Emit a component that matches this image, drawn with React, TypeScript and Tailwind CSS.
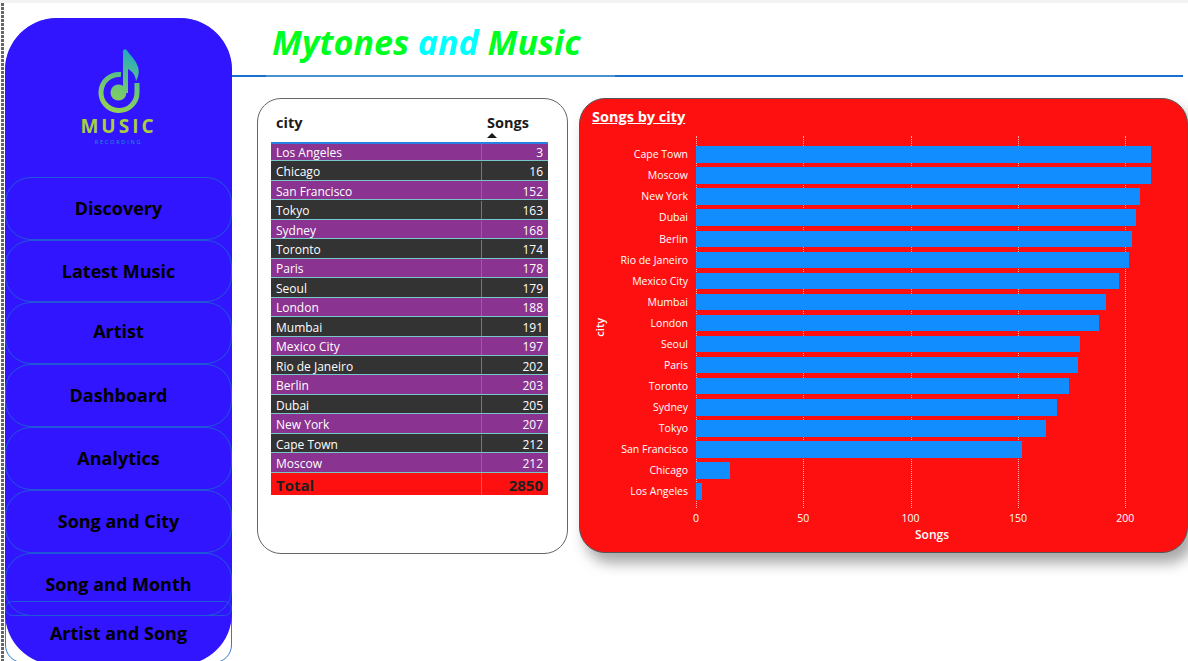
const cities: [string, number][] = [
  ['Los Angeles', 3],
  ['Chicago', 16],
  ['San Francisco', 152],
  ['Tokyo', 163],
  ['Sydney', 168],
  ['Toronto', 174],
  ['Paris', 178],
  ['Seoul', 179],
  ['London', 188],
  ['Mumbai', 191],
  ['Mexico City', 197],
  ['Rio de Janeiro', 202],
  ['Berlin', 203],
  ['Dubai', 205],
  ['New York', 207],
  ['Cape Town', 212],
  ['Moscow', 212],
];

const chartRows: [string, number][] = [
  ['Cape Town', 212],
  ['Moscow', 212],
  ...cities.slice(0, 15).reverse(),
];

const navItems = [
  { label: 'Discovery', className: 'h-[63px]' },
  { label: 'Latest Music', className: 'h-[62px]' },
  { label: 'Artist', className: 'h-[62px] pb-[3px]' },
  { label: 'Dashboard', className: 'h-[63px]' },
  { label: 'Analytics', className: 'h-[63px]' },
  { label: 'Song and City', className: 'h-[63px]' },
  { label: 'Song and Month', className: 'h-[63px]' },
];

function Logo() {
  return (
    <svg width="44" height="64" viewBox="0 0 44 64" fill="none">
      <defs>
        <linearGradient id="note" gradientUnits="userSpaceOnUse" x1="10" y1="60" x2="32" y2="0">
          <stop offset="0" stopColor="#93d255" />
          <stop offset="0.5" stopColor="#62c47c" />
          <stop offset="1" stopColor="#1fa8c8" />
        </linearGradient>
      </defs>
      <path d="M24 25.6A18 18 0 1 0 40 43.5V34" stroke="url(#note)" strokeWidth="5" />
      <circle cx="21.5" cy="43.5" r="8" fill="url(#note)" />
      <path
        d="M26 3C26 0 28.5 -0.5 30 1.5C33 6 39 11 41 18C42.5 23 41.5 28 39 32C38.5 26 35 22 31 20V44L26 44Z"
        fill="url(#note)"
      />
    </svg>
  );
}

function Sidebar() {
  return (
    <div className="h-[645px] w-[227px] shrink-0 rounded-t-[52px] rounded-b-[18px] border border-[#2f7fc8] bg-white">
      <div className="-m-[1px] flex h-[647px] w-[227px] flex-col rounded-[52px] bg-[#3215ff]">
        <div className="flex h-[159px] shrink-0 flex-col items-center pt-[31px]">
          <Logo />
          <div className="mt-[3px] text-[19px] font-bold leading-[20px] tracking-[3px] text-[#a8cf3c]">
            MUSIC
          </div>
          <div className="mt-[3px] text-[5.5px] leading-[6px] tracking-[1.8px] text-[#1a9ad0]">RECORDING</div>
        </div>
        {navItems.map((item) => (
          <div
            key={item.label}
            className={`flex shrink-0 items-center justify-center rounded-[26px] border border-[#2057d8] text-[18px] font-bold text-black ${item.className}`}
          >
            {item.label}
          </div>
        ))}
        <div className="-mt-[15px] h-[15px] shrink-0 rounded-[16px] border border-[#2057d8]" />
        <div className="flex h-[34px] shrink-0 items-center justify-center text-[18px] font-bold text-black">
          Artist and Song
        </div>
      </div>
    </div>
  );
}

function CityTable() {
  return (
    <div className="h-[456px] w-[311px] shrink-0 rounded-[24px] border border-[#666666] bg-white px-[13px] pt-[7px]">
      <div className="flex h-[36px] items-start text-[14.5px] font-bold text-[#1a1a1a]">
        <div className="w-[210px] pl-[5px] pt-[6px]">city</div>
        <div className="relative pl-[6px] pt-[6px]">
          Songs
          <div className="absolute left-[6px] top-[27px] h-0 w-0 border-x-[5px] border-b-[5px] border-x-transparent border-b-[#1a1a1a]" />
        </div>
      </div>
      <div className="w-[277px] text-[12px] text-white">
        {cities.map(([city, songs], i) => (
          <div
            key={city}
            className={`flex h-[19.46px] items-center border-b border-[#78c8c8] leading-none ${i % 2 === 0 ? 'bg-[#8a3391]' : 'bg-[#333333]'} ${i === 0 ? 'border-t-2 border-t-[#2a80e0]' : 'pt-[1px]'}`}
          >
            <div className="flex h-full w-[211px] items-center border-r border-[#777777] pl-[5px] pt-[2px]">{city}</div>
            <div className="flex-1 pr-[5px] pt-[2px] text-right">{songs}</div>
          </div>
        ))}
        <div className="flex h-[22px] items-center bg-[#ff1010] text-[15px] font-bold text-[#1f1f1f]">
          <div className="flex h-full w-[211px] items-center border-r border-[#ff5050] pl-[5px] pt-[3px]">Total</div>
          <div className="flex-1 pr-[5px] pt-[3px] text-right">2850</div>
        </div>
      </div>
    </div>
  );
}

function SongsChart() {
  const ticks = [0, 50, 100, 150, 200];
  return (
    <div className="h-[455px] flex-1 rounded-[26px] border border-[#555555] bg-[#ff1010] pl-[12px] pt-[9px] text-white shadow-[6px_10px_14px_rgba(0,0,0,0.35)]">
      <div className="h-[28px] text-[14.5px] font-bold leading-[18px] underline">Songs by city</div>
      <div className="flex">
        <div className="flex w-[14px] items-center pt-[10px]">
          <span className="-ml-[1px] -rotate-90 text-[11px] font-semibold">city</span>
        </div>
        <div className="ml-[3px] w-[79px] pt-[8px]">
          {chartRows.map(([city]) => (
            <div
              key={city}
              className="flex h-[21.07px] items-center justify-end whitespace-nowrap text-[10.5px] leading-none"
            >
              {city}
            </div>
          ))}
        </div>
        <div className="relative ml-[8px] h-[372px] w-[480px] pt-[8px]">
          {ticks.map((tick) => (
            <div
              key={tick}
              className="absolute top-0 h-[372px] border-l border-dotted border-[#ffb0b0]"
              style={{ left: tick * 2.146 }}
            />
          ))}
          {chartRows.map(([city, songs]) => (
            <div key={city} className="relative flex h-[21.07px] items-center">
              <div className="h-[16.5px] bg-[#118dff]" style={{ width: songs * 2.146 }} />
            </div>
          ))}
          {ticks.map((tick) => (
            <div
              key={tick}
              className="absolute top-[375px] w-[30px] -translate-x-1/2 text-center text-[10.5px]"
              style={{ left: tick * 2.146 }}
            >
              {tick}
            </div>
          ))}
          <div className="absolute left-[219px] top-[390px] text-[12px] font-semibold">Songs</div>
        </div>
      </div>
    </div>
  );
}

export default function App() {
  return (
    <div className="flex h-[661px] w-[1188px] flex-col overflow-hidden bg-white font-['Open_Sans','Noto_Sans',sans-serif]">
      <div className="h-[3px] shrink-0 bg-[#f3f3f3]" />
      <div className="flex flex-1">
        <div className="mx-[1px] h-full w-[3px] bg-[repeating-linear-gradient(to_bottom,#666666_0,#666666_3px,transparent_3px,transparent_4px)]" />
        <div className="pt-[15px]">
          <Sidebar />
        </div>
        <div className="flex-1">
          <div className="h-[74px] pl-[40px] pt-[15px]">
            <div className="text-[34px] font-bold italic leading-[48px] text-[#00ff1e]">
              Mytones <span className="text-[#00ffff]">and</span> Music
            </div>
          </div>
          <div className="-mt-[2px] flex h-[2px] w-[951px]">
            <div className="w-[34px] bg-[#1a6fd0]" />
            <div className="w-[349px] bg-[#4a8fd0]" />
            <div className="flex-1 bg-[#1a6fd0]" />
          </div>
          <div className="flex gap-[11px] pl-[25px] pt-[21px]">
            <CityTable />
            <SongsChart />
          </div>
        </div>
      </div>
    </div>
  );
}
